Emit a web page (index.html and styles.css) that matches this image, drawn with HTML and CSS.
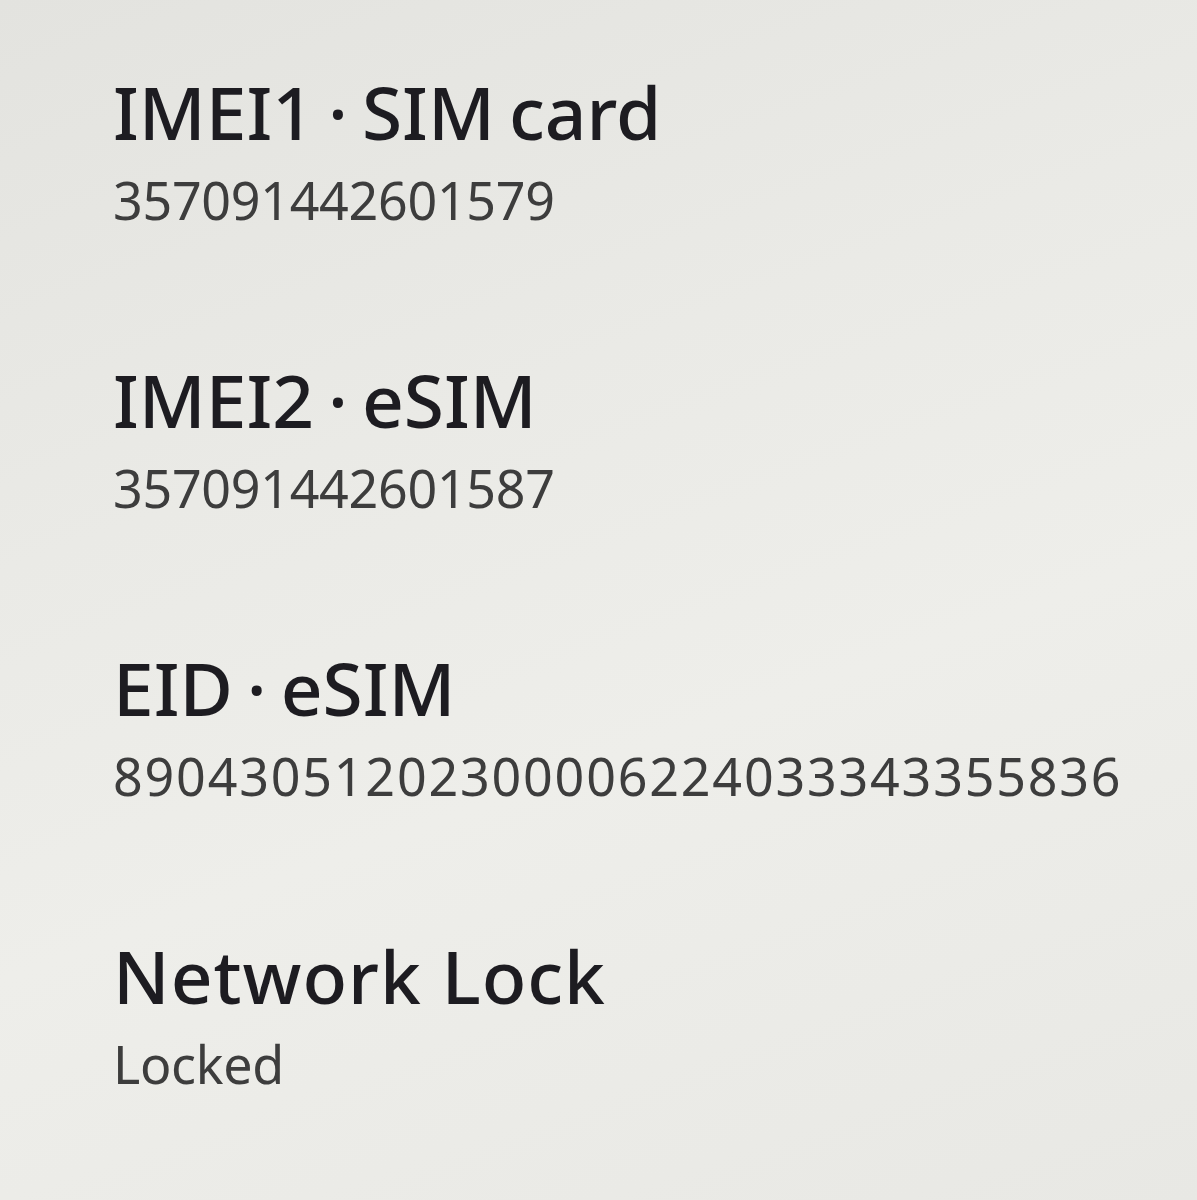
FILE: index.html
```html
<!DOCTYPE html>
<html lang="en">
<head>
<meta charset="utf-8">
<title>Device info</title>
<link rel="stylesheet" href="styles.css">
</head>
<body>
<main class="info-list">
  <section class="info-item">
    <h2 class="info-title">IMEI1 · SIM card</h2>
    <p class="info-value">357091442601579</p>
  </section>
  <section class="info-item">
    <h2 class="info-title">IMEI2 · eSIM</h2>
    <p class="info-value">357091442601587</p>
  </section>
  <section class="info-item">
    <h2 class="info-title">EID · eSIM</h2>
    <p class="info-value info-value--long">89043051202300006224033343355836</p>
  </section>
  <section class="info-item">
    <h2 class="info-title info-title--wide">Network Lock</h2>
    <p class="info-value">Locked</p>
  </section>
</main>
</body>
</html>
```
FILE: styles.css
```css
html, body {
  margin: 0;
  padding: 0;
  height: 100%;
}
body {
  background: linear-gradient(160deg, #e3e3df 0%, #eaeae6 35%, #eeeeea 60%, #e8e8e4 100%);
  font-family: "Noto Sans", "Open Sans", sans-serif;
  overflow: hidden;
}
.info-list {
  display: flex;
  flex-direction: column;
  gap: 120px;
  padding: 72px 0 0 113px;
}
.info-item {
  display: flex;
  flex-direction: column;
  gap: 8px;
}
.info-title {
  margin: 0;
  font-size: 73px;
  line-height: 80px;
  font-weight: 500;
  color: #1d1c21;
  letter-spacing: 0;
  word-spacing: -5px;
}
.info-title--wide {
  letter-spacing: 1px;
  word-spacing: 0;
}
.info-value {
  margin: 0;
  font-size: 52px;
  line-height: 80px;
  font-weight: 400;
  color: #3d3d3d;
  letter-spacing: -0.3px;
}
.info-value--long {
  letter-spacing: 1.8px;
}
```
